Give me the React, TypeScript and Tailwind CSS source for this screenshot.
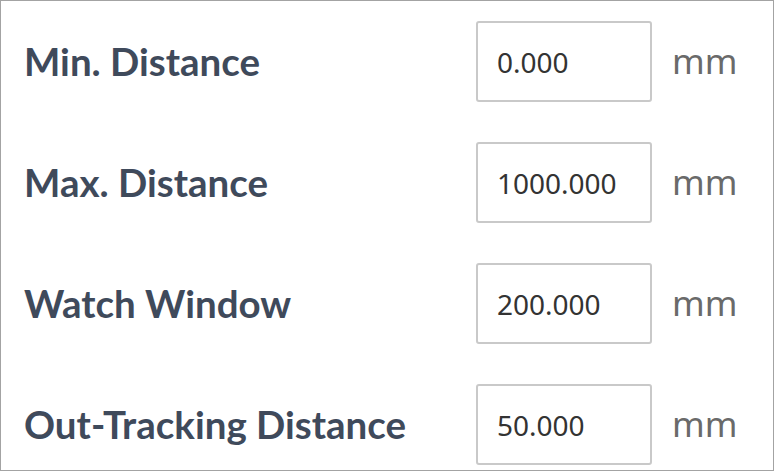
const rows = [
  { label: "Min. Distance", value: "0.000" },
  { label: "Max. Distance", value: "1000.000" },
  { label: "Watch Window", value: "200.000" },
  { label: "Out-Tracking Distance", value: "50.000" },
];

export default function App() {
  return (
    <div className="w-[774px] h-[471px] bg-white border border-[#a3a3a3] pt-[20px]">
      <div className="flex flex-col gap-[40px]">
        {rows.map((row) => (
          <div key={row.label} className="flex items-center h-[81px]">
            <div className="w-[475px] shrink-0 pl-[23px] font-['Lato',sans-serif] font-bold text-[38.5px] text-[#3f4a5b]">
              {row.label}
            </div>
            <div className="w-[176px] h-[81px] shrink-0 border-2 border-[#c9c9c9] rounded-[3px] flex items-center pl-[19px] font-['Noto_Sans',sans-serif] text-[28px] text-[#333]">
              {row.value}
            </div>
            <div className="ml-[20px] font-['Noto_Sans',sans-serif] text-[35px] text-[#6a6a6a]">
              mm
            </div>
          </div>
        ))}
      </div>
    </div>
  );
}
